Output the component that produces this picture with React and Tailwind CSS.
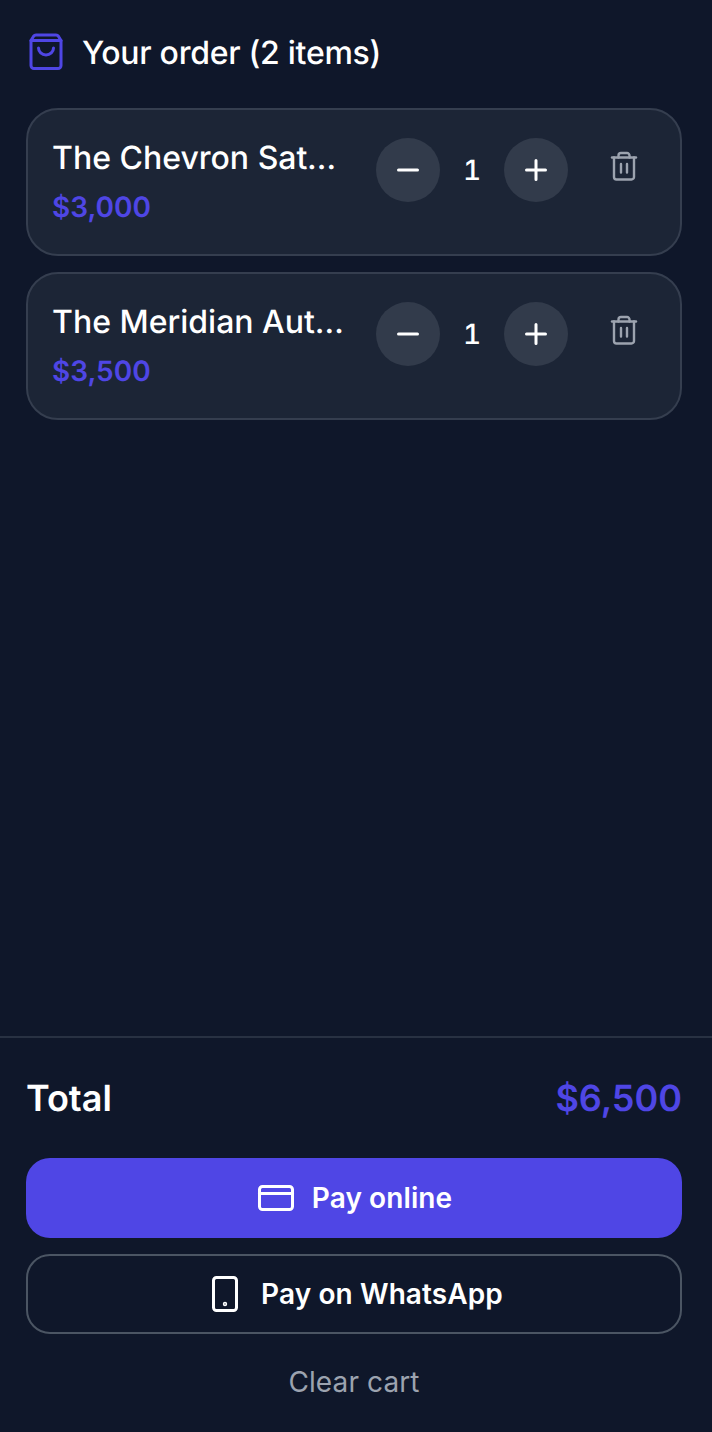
const F = { fontFamily: 'Inter, "Liberation Sans", sans-serif', textRendering: 'geometricPrecision' };

function Bag() {
  return (
    <svg width="40" height="40" viewBox="0 0 40 40" fill="none" stroke="#4f46e5" strokeWidth="3" strokeLinecap="round" strokeLinejoin="round">
      <path d="M10 3h20a3 3 0 0 1 2.4 1.2L35 8.5v25a3 3 0 0 1-3 3H8a3 3 0 0 1-3-3v-25l2.6-4.3A3 3 0 0 1 10 3z" />
      <path d="M5 8.5h30" />
      <path d="M12.5 16a7.5 7 0 0 0 15 0" />
    </svg>
  );
}

function Trash() {
  return (
    <svg width="32" height="32" viewBox="0 0 32 32" fill="none" stroke="#9ca3af" strokeWidth="2.4" strokeLinecap="round" strokeLinejoin="round">
      <path d="M4 7.5h24" />
      <path d="M10.5 7.5V5.5A2.5 2.5 0 0 1 13 3h6a2.5 2.5 0 0 1 2.5 2.5v2" />
      <path d="M6 7.5V27a2.5 2.5 0 0 0 2.5 2.5h15A2.5 2.5 0 0 0 26 27V7.5" />
      <path d="M13 14v8.5M19 14v8.5" />
    </svg>
  );
}

function Minus() {
  return (
    <svg width="24" height="24" viewBox="0 0 24 24" fill="none" stroke="#fff" strokeWidth="3" strokeLinecap="round">
      <path d="M2.5 12h19" />
    </svg>
  );
}

function Plus() {
  return (
    <svg width="24" height="24" viewBox="0 0 24 24" fill="none" stroke="#fff" strokeWidth="3" strokeLinecap="round">
      <path d="M2.5 12h19M12 2.5v19" />
    </svg>
  );
}

function Card() {
  return (
    <svg width="40" height="40" viewBox="0 0 40 40" fill="none" stroke="#fff" strokeWidth="3" strokeLinecap="round" strokeLinejoin="round">
      <rect x="3.5" y="8.5" width="33" height="23" rx="3" />
      <path d="M3.5 15.5h33" />
    </svg>
  );
}

function Phone() {
  return (
    <svg width="40" height="40" viewBox="0 0 40 40" fill="none" stroke="#fff" strokeWidth="3" strokeLinecap="round" strokeLinejoin="round">
      <rect x="8.5" y="3.5" width="23" height="33" rx="3" />
      <circle cx="20" cy="30" r="0.7" fill="#fff" />
    </svg>
  );
}

function Item({ name, price }) {
  return (
    <div className="flex items-start h-[148px] rounded-[32px] border-2 border-[#353e4f] bg-[#1c2536] p-6">
      <div className="min-w-0 flex-1">
        <div className="text-[32px] leading-[48px] font-medium text-white truncate">{name}</div>
        <div className="text-[28px] leading-[40px] font-semibold text-[#4f46e5] mt-[5px]">{price}</div>
      </div>
      <div className="flex items-center mt-1 ml-[30px]">
        <button className="flex items-center justify-center w-16 h-16 rounded-full bg-[#323b4b]"><Minus /></button>
        <span className="w-16 text-center text-[28px] font-medium text-white tabular-nums">1</span>
        <button className="flex items-center justify-center w-16 h-16 rounded-full bg-[#323b4b]"><Plus /></button>
      </div>
      <button className="ml-6 p-4"><Trash /></button>
    </div>
  );
}

export default function App() {
  return (
    <div className="flex flex-col h-[1432px] bg-[#0f172a]" style={F}>
      <div className="flex-1 pl-[26px] pr-[30px] pt-8">
        <div className="flex items-center gap-4 h-10 mb-[36px]">
          <Bag />
          <h1 className="text-[32px] leading-10 mt-[2px] font-medium text-white tracking-[-0.27px]">Your order (2 items)</h1>
        </div>
        <div className="flex flex-col gap-4">
          <Item name="The Chevron Satchel" price="$3,000" />
          <Item name="The Meridian Automatic" price="$3,500" />
        </div>
      </div>
      <div className="border-t-2 border-[#283142] pl-[26px] pr-[30px] pt-[38px] pb-[30px]">
        <div className="flex items-center justify-between h-11 mb-[38px]">
          <span className="text-[36px] font-semibold text-white">Total</span>
          <span className="text-[36px] font-semibold text-[#4f46e5]">$6,500</span>
        </div>
        <button className="flex items-center justify-center gap-4 w-full h-20 rounded-3xl bg-[#4f46e5] text-[28px] font-semibold tracking-[0.1px] text-white"><Card />Pay online</button>
        <button className="flex items-center justify-center gap-4 w-full h-20 mt-4 rounded-3xl border-2 border-[#4b5563] text-[28px] font-semibold tracking-[0.1px] text-white"><Phone />Pay on WhatsApp</button>
        <button className="block w-full mt-7 text-[28px] leading-10 tracking-[0.1px] text-[#9ca3af]">Clear cart</button>
      </div>
    </div>
  );
}
